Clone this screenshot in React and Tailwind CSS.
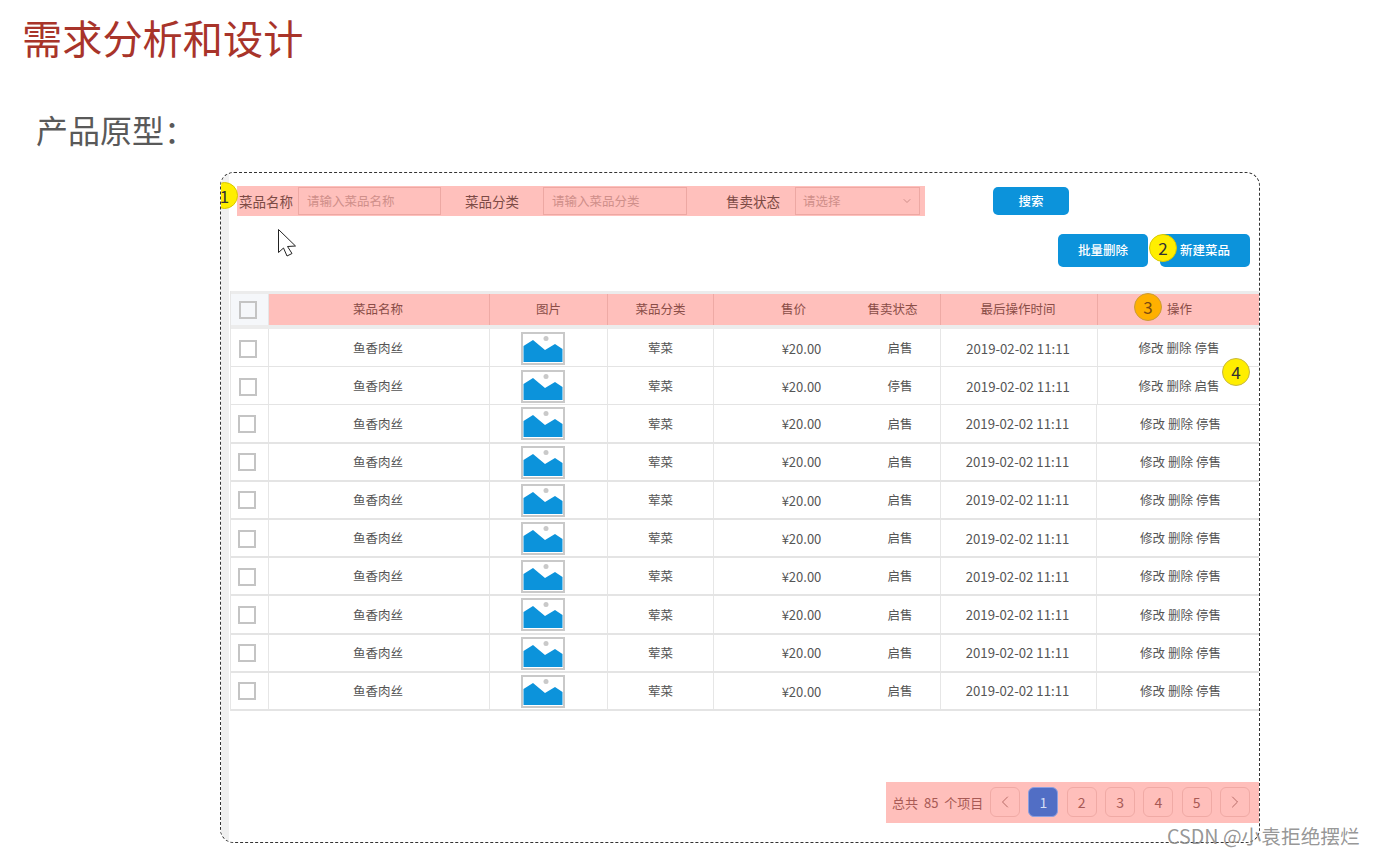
import { ChevronDown, ChevronLeft, ChevronRight } from "lucide-react";

const rows = ["启售", "停售", "启售", "启售", "启售", "启售", "启售", "启售", "启售", "启售"];
const firstCols = "grid-cols-[38px_221px_118px_106px_147px_80px_157px_1fr]";
const laterCols = "grid-cols-[38px_221px_118px_106px_147px_80px_156px_1fr]";

function Thumb() {
  return (
    <svg width="44" height="33" viewBox="0 0 44 33">
      <rect x="1" y="1" width="42" height="31" fill="#ffffff" stroke="#c9c9c9" strokeWidth="2" />
      <circle cx="25" cy="6.5" r="2.5" fill="#c9c9c9" />
      <path d="M2.5 30 V14 L12 8 L24 18 L34 12 L41.5 17 V30 Z" fill="#0c93db" />
    </svg>
  );
}

function Field({ text, className, children }) {
  return (
    <div className={`flex items-center h-[28px] border border-[#eda8a3] bg-[#ffc0bc] pr-[6px] text-[12.5px] text-[#cf8f8a] ${className}`}>
      <span className="flex-1">{text}</span>
      {children}
    </div>
  );
}

function PageBtn({ children, active }) {
  return (
    <div
      className={
        active
          ? "flex items-center justify-center w-[30px] h-[30px] rounded-[6px] bg-[#516ec5] border border-[#8c9fe0] text-[14px] text-[#d5def5]"
          : "flex items-center justify-center w-[30px] h-[30px] rounded-[6px] border border-[#f0aaa5] text-[14px] text-[#a85a55]"
      }
    >
      {children}
    </div>
  );
}

function TableRow({ status, index }) {
  const later = index >= 2;
  const cell = later ? "flex items-center justify-center pt-[1px]" : "flex items-center justify-center pt-[2px]";
  return (
    <div
      className={`grid h-[38.2px] items-stretch text-[12.5px] text-[#555555] border-[#e4e4e4] ${later ? laterCols : firstCols} ${later ? "border-b-2" : "border-b"}`}
    >
      <div className={`${cell} pr-[4px] border-r border-[#e6e6e6]`}>
        <div className={`w-[18px] h-[18px] bg-white border-2 border-[#c4c4c4] ${later ? "-ml-[2px]" : ""}`} />
      </div>
      <div className={`${cell} pr-[2px] border-r border-[#e6e6e6]`}>鱼香肉丝</div>
      <div className={`${cell} pr-[12px] border-r border-[#e6e6e6]`}>
        <Thumb />
      </div>
      <div className={`${cell} border-r border-[#e6e6e6]`}>荤菜</div>
      <div className={`${cell} pl-[28px] text-[13px]`}>¥20.00</div>
      <div className={`${cell} pr-[1px] border-r border-[#e6e6e6]`}>{status}</div>
      <div className={`${cell} text-[13.2px] pr-[2px] border-r border-[#e6e6e6]`}>2019-02-02 11:11</div>
      <div className={`${cell} gap-[3px] ${later ? "pl-[5px]" : "pl-[1px]"}`}>
        <span>修改</span>
        <span>删除</span>
        <span>{status === "启售" ? "停售" : "启售"}</span>
      </div>
    </div>
  );
}

export default function App() {
  return (
    <div className="relative w-[1374px] h-[856px] overflow-hidden bg-white font-['Noto_Sans_CJK_SC','Noto_Sans',sans-serif]">
      <h1 className="pl-[22px] pt-[9px] h-[84px] text-[40.2px] leading-[56px] text-[#a8342a]">需求分析和设计</h1>
      <h2 className="pl-[36px] pt-[22px] h-[76px] text-[32px] leading-[46px] text-[#595959]">产品原型：</h2>

      {/* dashed prototype frame */}
      <div className="relative ml-[220px] w-[1040px] h-[671px] mt-[12px] flex border border-dashed border-[#333333] rounded-[14px] overflow-hidden">
        <div className="w-[8px] bg-[#f0f0f0] shrink-0" />
        <div className="flex-1 ml-[1px] min-w-0">
          {/* search bar */}
          <div className="flex items-center pt-[13px]">
            <div className="flex items-center ml-[7px] w-[688px] h-[30px] bg-[#ffc0bc] text-[13.5px] text-[#7c4a45]">
              <span className="ml-[2px] w-[55px] whitespace-nowrap">菜品名称</span>
              <Field text="请输入菜品名称" className="ml-[4px] w-[143px] pl-[8px]" />
              <span className="ml-[24px] w-[54px] whitespace-nowrap">菜品分类</span>
              <Field text="请输入菜品分类" className="ml-[24px] w-[144px] pl-[8px]" />
              <span className="ml-[39px] w-[54px] whitespace-nowrap">售卖状态</span>
              <Field text="请选择" className="ml-[15px] w-[125px] pl-[7px]">
                <ChevronDown size={12} className="text-[#cf8f8a]" />
              </Field>
            </div>
            <button className="ml-[68px] w-[76px] h-[28px] rounded-[5px] bg-[#0c93db] text-[12.5px] font-medium text-white">搜索</button>
          </div>

          {/* actions */}
          <div className="flex justify-end gap-[12px] pr-[9px] mt-[18px]">
            <button className="w-[90px] h-[33px] rounded-[5px] bg-[#0c93db] text-[12.5px] font-medium text-white">批量删除</button>
            <button className="w-[90px] h-[33px] rounded-[5px] bg-[#0c93db] text-[12.5px] font-medium text-white">新建菜品</button>
          </div>

          {/* table */}
          <div className="mt-[24px] border-l border-[#e6e6e6]">
            <div className={`grid h-[38px] border-t-[3px] border-b-[4px] border-[#ececec] text-[12.5px] text-[#8a4d47] ${firstCols}`}>
              <div className="flex items-center justify-center pr-[4px] bg-[#f5f7fa] border-r border-[#e6e6e6]">
                <div className="w-[18px] h-[18px] bg-[#f5f7fa] border-2 border-[#c4c4c4]" />
              </div>
              <div className="flex items-center justify-center pr-[2px] bg-[#ffbfbb] border-r border-[#eeaaa5]">菜品名称</div>
              <div className="flex items-center justify-center bg-[#ffbfbb] border-r border-[#eeaaa5]">图片</div>
              <div className="flex items-center justify-center bg-[#ffbfbb] border-r border-[#eeaaa5]">菜品分类</div>
              <div className="flex items-center justify-center bg-[#ffbfbb] pl-[12px]">售价</div>
              <div className="flex items-center justify-center bg-[#ffbfbb] border-r border-[#eeaaa5] pr-[16px]">售卖状态</div>
              <div className="flex items-center justify-center bg-[#ffbfbb] border-r border-[#eeaaa5] pr-[2px]">最后操作时间</div>
              <div className="flex items-center justify-center bg-[#ffbfbb] pl-[2px]">操作</div>
            </div>
            {rows.map((status, i) => (
              <TableRow key={i} status={status} index={i} />
            ))}
          </div>

          {/* pagination */}
          <div className="ml-auto mt-[71px] w-[373px] h-[41px] flex items-center bg-[#ffbfbb] pl-[6px]">
            <span className="w-[91px] whitespace-nowrap text-[13px] [word-spacing:3px] text-[#a85a55]">总共 85 个项目</span>
            <div className="flex gap-[8.35px] ml-[7px]">
              <PageBtn>
                <ChevronLeft size={20} strokeWidth={1} />
              </PageBtn>
              <PageBtn active>1</PageBtn>
              <PageBtn>2</PageBtn>
              <PageBtn>3</PageBtn>
              <PageBtn>4</PageBtn>
              <PageBtn>5</PageBtn>
              <PageBtn>
                <ChevronRight size={20} strokeWidth={1} />
              </PageBtn>
            </div>
          </div>
        </div>

        {/* numbered callouts */}
        <div className="absolute left-[-10px] top-[9px] w-[27px] h-[27px] rounded-full bg-[#ffee00] border border-[#d8c800] flex items-center justify-center text-[17px] text-[#333333]">1</div>
        <div className="absolute left-[928px] top-[61px] w-[28px] h-[28px] rounded-full bg-[#ffee00] border border-[#d8c800] flex items-center justify-center text-[17px] text-[#333333]">2</div>
        <div className="absolute left-[913px] top-[120px] w-[28px] h-[28px] rounded-full bg-[#ffb000] border border-[#c99b3a] flex items-center justify-center text-[17px] text-[#7a4a10]">3</div>
        <div className="absolute left-[1001px] top-[185px] w-[28px] h-[28px] rounded-full bg-[#ffee00] border border-[#c8b840] flex items-center justify-center text-[17px] text-[#333333]">4</div>

        {/* mouse pointer */}
        <svg className="absolute left-[56px] top-[55px]" width="20" height="30" viewBox="0 0 20 30">
          <path d="M1.5 1.5 V24.5 L6.5 20 L10 28 L15 25.5 L10.5 18.5 L18.5 18 Z" fill="#ffffff" stroke="#222222" strokeWidth="1" />
        </svg>
      </div>

      <span className="absolute left-[1167px] top-[822px] text-[19.7px] leading-[28px] whitespace-nowrap text-[#8a8a8a]/90">CSDN @小袁拒绝摆烂</span>
    </div>
  );
}
